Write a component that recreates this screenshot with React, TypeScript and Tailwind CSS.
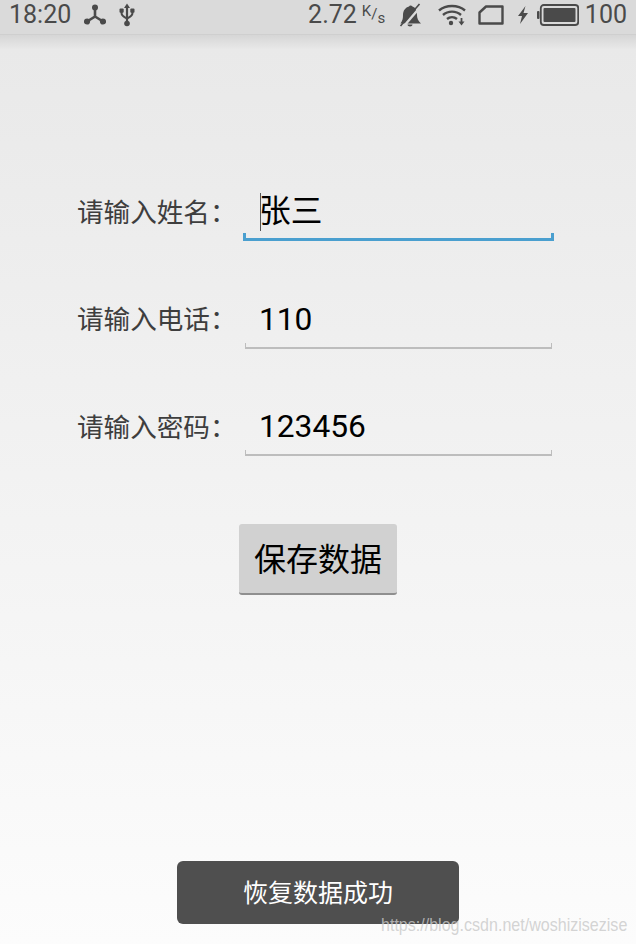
const CJK = `font-["Roboto","Noto_Sans_CJK_SC",sans-serif]`;

function Network() {
  return (
    <svg width="22" height="22" viewBox="0 0 22 22">
      <circle cx="11" cy="3.5" r="3" fill="#4a4a4a" />
      <circle cx="3" cy="17.5" r="3.1" fill="#4a4a4a" />
      <circle cx="19" cy="17.5" r="3.1" fill="#4a4a4a" />
      <path d="M11 3.5V12.5L3 17.5M11 12.5L19 17.5" stroke="#4a4a4a" strokeWidth="2.6" fill="none" />
    </svg>
  );
}

function Usb() {
  return (
    <svg width="16" height="24" viewBox="0 0 16 24">
      <path d="M8 0.5L11 5H5Z" fill="#4a4a4a" />
      <path d="M8 4V20" stroke="#4a4a4a" strokeWidth="2.2" />
      <circle cx="8" cy="20.5" r="2.8" fill="#4a4a4a" />
      <path d="M2.6 8V10.5C2.6 13 4.5 13.5 8 15.5C11.5 13.5 13.4 13 13.4 10.5V8" stroke="#4a4a4a" strokeWidth="2" fill="none" />
      <rect x="0.5" y="5.5" width="4.2" height="4.2" rx="1" fill="#4a4a4a" />
      <rect x="11.3" y="5.5" width="4.2" height="4.2" rx="1" fill="#4a4a4a" />
    </svg>
  );
}

function BellOff() {
  return (
    <svg width="24" height="24" viewBox="0 0 24 24">
      <path d="M2.5 20.5C4.8 17.5 5 15 5 12C5 7.5 7.5 4.5 11 3.5C11.5 2 13.5 2 14.5 3.5C17.5 4.5 19 7.5 19 12C19 15 20 18 23 20.5Z" fill="#4a4a4a" />
      <path d="M9.5 21.5H14.5C14.5 24 9.5 24 9.5 21.5Z" fill="#4a4a4a" />
      <path d="M23.5 2.5L6 23" stroke="#dadada" strokeWidth="2.4" />
      <path d="M21.5 1L2.5 23" stroke="#4a4a4a" strokeWidth="1.6" />
    </svg>
  );
}

function Wifi() {
  return (
    <svg width="28" height="22" viewBox="0 0 28 22" fill="none">
      <path d="M1 6.5C8 0.5 20 0.5 27 6.5" stroke="#4a4a4a" strokeWidth="2.4" />
      <path d="M5 11C10 6.5 18 6.5 23 11" stroke="#4a4a4a" strokeWidth="2.4" />
      <path d="M9 15C12 12.5 16 12.5 19 15" stroke="#4a4a4a" strokeWidth="2.4" />
      <circle cx="13" cy="19" r="2.2" fill="#4a4a4a" />
      <path d="M23.5 14V18" stroke="#4a4a4a" strokeWidth="1.8" />
      <path d="M20.5 17.5H26.5L23.5 21.5Z" fill="#4a4a4a" />
    </svg>
  );
}

function Sim() {
  return (
    <svg width="26" height="20" viewBox="0 0 26 20" fill="none">
      <path d="M8 1.5H24.5V18.5H1.5V7.5Z" stroke="#4a4a4a" strokeWidth="2.4" strokeLinejoin="round" />
    </svg>
  );
}

function Bolt() {
  return (
    <svg width="12" height="18" viewBox="0 0 12 18">
      <path d="M8.5 0L1 10H5L3 18L11 7H6.5Z" fill="#4a4a4a" />
    </svg>
  );
}

function Battery() {
  return (
    <svg width="42" height="22" viewBox="0 0 42 22" fill="none">
      <rect x="0" y="7" width="2.5" height="8" rx="1" fill="#4a4a4a" />
      <rect x="3.8" y="1" width="37.4" height="20" rx="3" stroke="#4a4a4a" strokeWidth="1.8" />
      <rect x="6.5" y="4" width="32" height="14" rx="1" fill="#4a4a4a" />
    </svg>
  );
}

function Field({ label, value, focused }: { label: string; value: string; focused?: boolean }) {
  return (
    <div className="flex items-center h-[46px]">
      <span className="w-[167px] pb-[11px] text-[26.6px] text-[#3e3e3e] whitespace-nowrap">{label}</span>
      <div className="relative w-[310px] h-[46px] flex items-center pl-[15px] pb-[12px] text-[31.7px] text-black">
        {focused && <span className="absolute left-[16px] top-[-2px] w-px h-[38px] bg-[#555]" />}
        <span>{value}</span>
        {focused ? (
          <span className="absolute left-[-1px] right-0 bottom-0 h-[8px] border-x-[3px] border-b-[3px] border-[#4a9fcf]" />
        ) : (
          <span className="absolute left-[1px] right-[2px] bottom-0 h-[6px] border-x border-b-2 border-[#bdbdbd]" />
        )}
      </div>
    </div>
  );
}

export default function App() {
  return (
    <div className={`relative w-[636px] h-[944px] overflow-hidden flex flex-col bg-gradient-to-b from-[#e8e8e8] to-[#fcfcfc] ${CJK}`}>
      <header className="flex items-center h-[35px] pl-[9px] pr-[9px] pb-[5px] bg-[#dadada] border-b border-[#cfcfcf] text-[#4a4a4a] text-[25px]">
        <span>18:20</span>
        <span className="ml-[13px] flex"><Network /></span>
        <span className="ml-[13px] flex"><Usb /></span>
        <span className="ml-auto">2.72</span>
        <span className="ml-[5px] flex items-start text-[15px] leading-none w-[21px] h-[20px]">
          <span className="-mt-[1px]">K</span>
          <span className="mt-[2px]">/</span>
          <span className="mt-[6px]">s</span>
        </span>
        <span className="ml-[15px] flex"><BellOff /></span>
        <span className="ml-[16px] flex"><Wifi /></span>
        <span className="ml-[12px] flex"><Sim /></span>
        <span className="ml-[13px] flex"><Bolt /></span>
        <span className="ml-[8px] flex"><Battery /></span>
        <span className="ml-[6px]">100</span>
      </header>
      <div className="h-[14px] bg-gradient-to-b from-[#d6d6d6] to-[#e8e8e8]" />

      <main className="flex flex-col items-start pl-[77px] pt-[146px] gap-[61.5px]">
        <Field label="请输入姓名：" value="张三" focused />
        <Field label="请输入电话：" value="110" />
        <Field label="请输入密码：" value="123456" />
      </main>

      <div className="flex justify-center mt-[68px]">
        <button className="w-[158px] h-[71px] pt-[2px] rounded-[3px] bg-[#d1d1d1] border-b-2 border-[#8f8f8f] text-[32px] text-black">
          保存数据
        </button>
      </div>

      <div className="absolute left-[177px] top-[861px] w-[282px] h-[63px] pt-[2px] rounded-[6px] bg-[#4f4f4f] flex items-center justify-center text-white text-[25px]">
        恢复数据成功
      </div>
      <span className="absolute left-[381px] top-[913px] origin-left scale-x-[0.845] text-[19px] leading-[24px] text-[#c9c9c9]/80 font-['Liberation_Sans',sans-serif] whitespace-nowrap">
        https://blog.csdn.net/woshizisezise
      </span>
    </div>
  );
}
